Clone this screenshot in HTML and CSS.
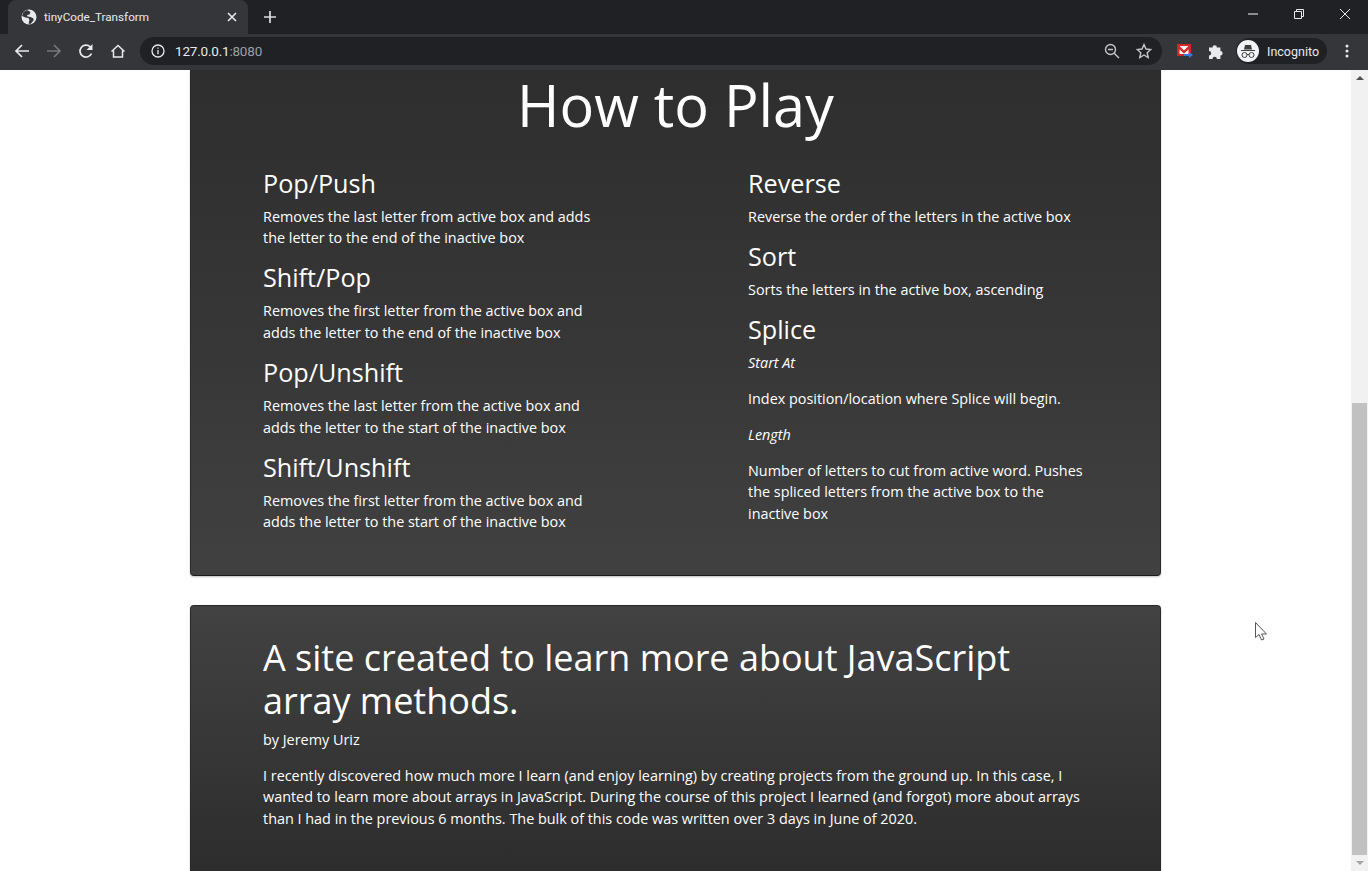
FILE: index.html
```html
<!DOCTYPE html>
<html lang="en">
    <head>
        <meta charset="UTF-8">
        <title>tinyCode_Transform</title>
        <link rel="stylesheet" href="styles.css">
    </head>
    <body>
        <header class="browser">
            <div class="tabstrip">
                <div class="tab">
                    <svg class="favicon" viewBox="0 0 16 16" width="16" height="16">
                        <circle cx="8" cy="8" r="7.5" fill="#e8eaed"/>
                        <path d="M6 1 2.500 3 1 7l3.500 1.500 3 .5 1 2-1 3.500 2 .5 3-3.500 0-2-3-1.500-3-.5-.5-1.500 2.500-.5 1-2.500z" fill="#35363a"/>
                    </svg>
                    <span class="tab-title">tinyCode_Transform</span>
                    <svg class="tab-close" viewBox="0 0 10 10" width="10" height="10">
                        <path d="M1 1l8 8M9 1l-8 8" stroke="#e8eaed" stroke-width="1.6" fill="none"/>
                    </svg>
                </div>
                <svg class="new-tab" viewBox="0 0 12 12" width="12" height="12">
                    <path d="M6 0v12M0 6h12" stroke="#dadce0" stroke-width="1.7" fill="none"/>
                </svg>
                <div class="window-controls">
                    <svg viewBox="0 0 12 12" width="12" height="12"><path d="M1 6h10" stroke="#c4c6c9" stroke-width="1.300" fill="none"/></svg>
                    <svg viewBox="0 0 12 12" width="12" height="12"><path d="M1.500 3.500h7v7h-7zM3.500 3.500v-2h7v7h-2" stroke="#e8eaed" stroke-width="1" fill="none"/></svg>
                    <svg viewBox="0 0 12 12" width="12" height="12"><path d="M1 1l10 10M11 1 1 11" stroke="#e8eaed" stroke-width="1" fill="none"/></svg>
                </div>
            </div>
            <div class="toolbar">
                <svg class="nav-icon" viewBox="0 0 16 16" width="16" height="16"><path d="M15 8H2M8 2 2 8l6 6" stroke="#e8eaed" stroke-width="1.7" fill="none"/></svg>
                <svg class="nav-icon" viewBox="0 0 16 16" width="16" height="16"><path d="M1 8h13M8 2l6 6-6 6" stroke="#75777a" stroke-width="1.7" fill="none"/></svg>
                <svg class="nav-icon" viewBox="0 0 16 16" width="16" height="16"><path d="M13.500 10.500A6 6 0 1 1 12.200 3.800" stroke="#e8eaed" stroke-width="1.7" fill="none"/><path d="M14.500 1v6h-6z" fill="#e8eaed"/></svg>
                <svg class="nav-icon" viewBox="0 0 16 16" width="16" height="16"><path d="M1.500 8.500 8 2.500l6.500 6M3.500 7.500v6.500h9V7.500" stroke="#e8eaed" stroke-width="1.500" fill="none"/></svg>
                <div class="omnibox">
                    <svg viewBox="0 0 14 14" width="14" height="14"><circle cx="7" cy="7" r="6" stroke="#e8eaed" stroke-width="1.300" fill="none"/><path d="M7 6v4.200M7 3.400v1.400" stroke="#e8eaed" stroke-width="1.300"/></svg>
                    <span class="url">127.0.0.1<span class="url-port">:8080</span></span>
                    <svg class="omni-zoom" viewBox="0 0 16 16" width="16" height="16"><circle cx="6.500" cy="6.500" r="5" stroke="#c4c6c9" stroke-width="1.400" fill="none"/><path d="M10.200 10.200 15 15M4 6.500h5" stroke="#c4c6c9" stroke-width="1.400" fill="none"/></svg>
                    <svg viewBox="0 0 16 16" width="16" height="16"><path d="M8 1.500l2 4.500 4.800.5-3.600 3.200 1 4.800L8 12l-4.200 2.500 1-4.800L1.200 6.500 6 6z" stroke="#c4c6c9" stroke-width="1.400" fill="none"/></svg>
                </div>
                <svg class="ext-mail" viewBox="0 0 16 14" width="16" height="14">
                    <path d="M0 0h14v12H0z" fill="#d3262b"/>
                    <path d="M2.500 2h9v8h-9z" fill="#f4f4f4"/>
                    <path d="M2 1.500 7 6.500l5-5v3.500L7 9.500 2 5z" fill="#d3262b"/>
                    <path d="M7 10h5V8l4 3-4 3v-2H7z" fill="#3b78d8"/>
                </svg>
                <svg class="ext-puzzle" viewBox="0 0 16 16" width="16" height="16">
                    <path d="M1 4.500h3.500a2.200 2.200 0 1 1 4.400 0h3.500V8a2.200 2.200 0 1 1 0 4.400V16H8.900a2.200 2.200 0 1 0-4.400 0H1v-3.600a2.200 2.200 0 1 0 0-4.400z" fill="#e8eaed"/>
                </svg>
                <div class="profile">
                    <span class="avatar">
                        <svg viewBox="0 0 22 22" width="22" height="22">
                            <path d="M4 10h14v1H4zM7 9.500l1-4.500h6l1 4.500z" fill="#3c3d40"/>
                            <circle cx="7.500" cy="15" r="2.500" stroke="#3c3d40" stroke-width="1" fill="none"/>
                            <circle cx="14.500" cy="15" r="2.500" stroke="#3c3d40" stroke-width="1" fill="none"/>
                            <path d="M10 14.500h2" stroke="#3c3d40" stroke-width="1"/>
                        </svg>
                    </span>
                    <span class="profile-name">Incognito</span>
                </div>
                <svg class="menu-dots" viewBox="0 0 4 14" width="4" height="14">
                    <circle cx="2" cy="2" r="1.500" fill="#e8eaed"/>
                    <circle cx="2" cy="7" r="1.500" fill="#e8eaed"/>
                    <circle cx="2" cy="12" r="1.500" fill="#e8eaed"/>
                </svg>
            </div>
        </header>

        <div class="viewport">
            <main class="page">
                <section class="card card-rules">
                    <h1 class="rules-title">How to Play</h1>
                    <div class="rules">
                        <div class="rules-col">
                            <h3>Pop/Push</h3>
                            <p class="narrow">Removes the last letter from active box and adds the letter to the end of the inactive box</p>
                            <h3>Shift/Pop</h3>
                            <p class="narrow">Removes the first letter from the active box and adds the letter to the end of the inactive box</p>
                            <h3>Pop/Unshift</h3>
                            <p class="narrow">Removes the last letter from the active box and adds the letter to the start of the inactive box</p>
                            <h3>Shift/Unshift</h3>
                            <p class="narrow">Removes the first letter from the active box and adds the letter to the start of the inactive box</p>
                        </div>
                        <div class="rules-col">
                            <h3>Reverse</h3>
                            <p>Reverse the order of the letters in the active box</p>
                            <h3>Sort</h3>
                            <p>Sorts the letters in the active box, ascending</p>
                            <h3>Splice</h3>
                            <p><em>Start At</em></p>
                            <p>Index position/location where Splice will begin.</p>
                            <p><em>Length</em></p>
                            <p>Number of letters to cut from active word. Pushes the spliced letters from the active box to the inactive box</p>
                        </div>
                    </div>
                </section>
                <section class="card card-about">
                    <h2>A site created to learn more about JavaScript array methods.</h2>
                    <p>by Jeremy Uriz</p>
                    <p>I recently discovered how much more I learn (and enjoy learning) by creating projects from the ground up. In this case, I wanted to learn more about arrays in JavaScript. During the course of this project I learned (and forgot) more about arrays than I had in the previous 6 months. The bulk of this code was written over 3 days in June of 2020.</p>
                </section>
            </main>
            <div class="scrollbar">
                <span class="arrow-up"></span>
                <div class="scroll-track"><div class="scroll-thumb"></div></div>
                <span class="arrow-down"></span>
            </div>
            <svg class="cursor" viewBox="0 0 13 19" width="13" height="19">
                <path d="M.5.500v15l3.500-3 2.500 5.500 2.500-1-2.500-5h5z" fill="#fff" stroke="#555" stroke-width="1"/>
            </svg>
        </div>
    </body>
</html>
```

FILE: styles.css
```css
* {
    box-sizing: border-box;
}
html, body {
    height: 100%;
}
body {
    margin: 0;
    display: flex;
    flex-direction: column;
    overflow: hidden;
    font-family: "Open Sans", sans-serif;
    background: white;
}

/* browser window */
.browser {
    height: 70px;
    flex: none;
    font-family: Roboto, "Liberation Sans", sans-serif;
    color: #e8eaed;
}
.tabstrip {
    height: 34px;
    background: #202124;
    display: flex;
    align-items: center;
    padding-left: 8px;
}
.tab {
    width: 240px;
    height: 34px;
    background: #35363a;
    border-radius: 8px 8px 0 0;
    display: flex;
    align-items: center;
    padding: 0 11px 0 13px;
}
.tab-title {
    font-size: 11.7px;
    margin-left: 7px;
    flex: 1;
}
.new-tab {
    margin-left: 16px;
}
.window-controls {
    margin-left: auto;
    display: flex;
    gap: 34px;
    padding-right: 17px;
    margin-top: -6px;
}
.toolbar {
    height: 36px;
    background: #35363a;
    display: flex;
    align-items: center;
    padding-left: 14px;
    padding-bottom: 2px;
}
.nav-icon {
    margin-right: 16px;
}
.omnibox {
    width: 1022px;
    height: 28px;
    margin-left: -2px;
    background: #202124;
    border-radius: 14px;
    display: flex;
    align-items: center;
    gap: 10px;
    padding: 0 10px 0 11px;
    font-size: 13.5px;
    letter-spacing: -.2px;
}
.url {
    flex: 1;
}
.url-port {
    color: #9aa0a6;
}
.omni-zoom {
    margin-right: 6px;
}
.ext-mail {
    margin-left: 15px;
}
.ext-puzzle {
    margin-left: 15px;
}
.profile {
    margin-left: 12px;
    width: 91px;
    height: 26px;
    background: #202124;
    border-radius: 13px;
    display: flex;
    align-items: center;
    padding-left: 1px;
    font-size: 12.5px;
}
.avatar {
    width: 22px;
    height: 22px;
    background: #f1f3f4;
    border-radius: 50%;
    display: block;
}
.avatar svg {
    display: block;
}
.profile-name {
    margin-left: 8px;
}
.menu-dots {
    margin-left: 18px;
}

/* page area */
.viewport {
    flex: 1;
    min-height: 0;
    display: flex;
    position: relative;
}
.page {
    flex: 1;
    display: flex;
    flex-direction: column;
    align-items: center;
}
.card {
    flex: none;
    width: 971px;
    color: white;
    border: 1px solid #2a2a2a;
    border-bottom-color: #1c1c1c;
    border-radius: 4px;
    box-shadow: 0 1px 2px rgba(0,0,0,0.25);
    padding: 0 72px;
}
.card p {
    font-size: 14.4px;
    line-height: 21.6px;
    margin: 0 0 14.4px;
}
.card h3 {
    font-size: 25.2px;
    font-weight: 400;
    line-height: 30.24px;
    margin: 0 0 7.8px;
}
.card p + h3 {
    margin-top: -1px;
}
.card-rules {
    height: 506px;
    border-top: 0;
    border-radius: 0 0 4px 4px;
    background: linear-gradient(#2e2e2e, #363636 50%, #414141);
}
.rules-title {
    font-size: 57.6px;
    font-weight: 400;
    line-height: 70px;
    margin: 0;
    text-align: center;
}
.rules {
    display: grid;
    grid-template-columns: 485px 340px;
    margin-top: 27.7px;
}
.narrow {
    width: 340px;
}
.card-about {
    height: 300px;
    margin-top: 29px;
    padding-top: 30px;
    background: linear-gradient(#424242, #2a2a2a);
}
.card-about h2 {
    font-size: 36px;
    font-weight: 400;
    line-height: 43.2px;
    margin: 0 0 6.4px;
}

/* scrollbar */
.scrollbar {
    width: 17px;
    flex: none;
    background: #f1f1f1;
    display: flex;
    flex-direction: column;
    align-items: center;
}
.scroll-track {
    flex: 1;
    width: 100%;
    padding-top: 317px;
}
.scroll-thumb {
    height: 452px;
    margin: 0 1px;
    background: #c1c1c1;
}
.arrow-up, .arrow-down {
    flex: none;
    width: 0;
    height: 0;
    margin: 6px 0;
    border-left: 4px solid transparent;
    border-right: 4px solid transparent;
}
.arrow-up {
    border-bottom: 4px solid #505050;
}
.arrow-down {
    border-top: 4px solid #a3a3a3;
}

.cursor {
    position: absolute;
    left: 1255px;
    top: 552px;
}
```
